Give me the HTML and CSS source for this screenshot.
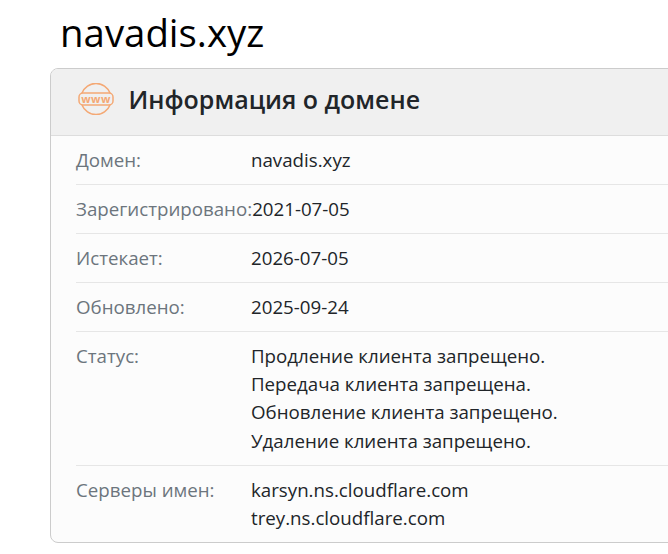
FILE: index.html
```html
<!DOCTYPE html>
<html lang="ru">
<head>
<meta charset="utf-8">
<title>navadis.xyz</title>
<link rel="stylesheet" href="styles.css">
</head>
<body>
<h1 class="title">navadis.xyz</h1>
<section class="card">
  <header class="card-head">
    <svg class="www" viewBox="0 0 36 32" width="36" height="32" fill="none" stroke="#f4a874" stroke-width="1.5">
      <path d="M4 10 A15 15 0 0 1 32 10"/>
      <path d="M4 22 A15 15 0 0 0 32 22"/>
      <rect x="1" y="10" width="34" height="12" rx="4"/>
      <text x="18" y="19.500" class="www-text">www</text>
    </svg>
    <h2 class="card-title">Информация о домене</h2>
  </header>
  <div class="row"><div class="label">Домен:</div><div class="value">navadis.xyz</div></div>
  <div class="row"><div class="label">Зарегистрировано:</div><div class="value">2021-07-05</div></div>
  <div class="row"><div class="label">Истекает:</div><div class="value">2026-07-05</div></div>
  <div class="row"><div class="label">Обновлено:</div><div class="value">2025-09-24</div></div>
  <div class="row"><div class="label">Статус:</div><div class="value">Продление клиента запрещено.<br>Передача клиента запрещена.<br>Обновление клиента запрещено.<br>Удаление клиента запрещено.</div></div>
  <div class="row"><div class="label">Серверы имен:</div><div class="value">karsyn.ns.cloudflare.com<br>trey.ns.cloudflare.com</div></div>
</section>
</body>
</html>
```
FILE: styles.css
```css
html, body { margin: 0; padding: 0; background: #fff; overflow: hidden; }
body { height: 554px; font-family: "Open Sans", sans-serif; color: #212529; box-sizing: border-box; padding-left: 50px; }
.title { margin: 0; padding: 7px 0 0 10px; height: 68px; box-sizing: border-box; font-size: 38.4px; font-weight: 400; line-height: 50px; color: #000; }
.card { width: 680px; box-sizing: border-box; border: 1px solid #ccc; border-radius: 8px; background: #fcfcfc; overflow: hidden; }
.card-head { height: 67px; box-sizing: border-box; display: flex; align-items: center; padding: 0 0 6px 27px; gap: 14.500px; background: #f0f0f0; border-bottom: 1px solid #ddd; }
.www { flex: none; }
.www-text { font-family: "Open Sans", sans-serif; font-size: 11px; font-weight: 700; fill: #f4a874; stroke: none; text-anchor: middle; letter-spacing: 0.5px; }
.card-title { margin: 0; font-size: 25px; font-weight: 600; color: #212529; line-height: 32px; }
.row { display: flex; margin-left: 25px; padding: 10px 0; border-bottom: 1px solid #e6e6e6; font-size: 18.72px; line-height: 28.08px; }
.row:last-child { border-bottom: 0; }
.label { min-width: 175px; flex: none; color: #6c757d; white-space: nowrap; }
.value { color: #212529; white-space: nowrap; }
```
